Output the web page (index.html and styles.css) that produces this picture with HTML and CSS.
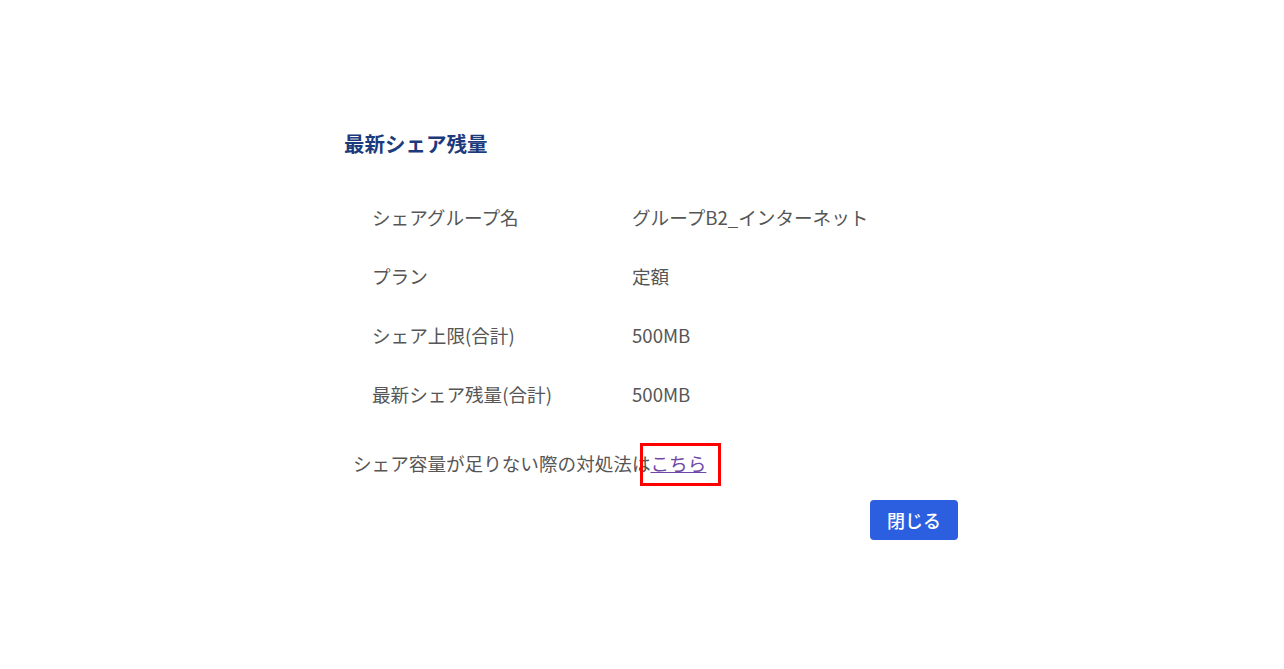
FILE: index.html
```html
<!DOCTYPE html>
<html lang="ja">
<head>
<meta charset="utf-8">
<link rel="stylesheet" href="styles.css">
</head>
<body>
<div class="dialog">
  <h2 class="title">最新シェア残量</h2>
  <div class="rows">
    <div class="row"><span class="label">シェアグループ名</span><span class="value">グループB2_インターネット</span></div>
    <div class="row"><span class="label">プラン</span><span class="value">定額</span></div>
    <div class="row"><span class="label">シェア上限(合計)</span><span class="value">500MB</span></div>
    <div class="row"><span class="label">最新シェア残量(合計)</span><span class="value">500MB</span></div>
  </div>
  <p class="note">シェア容量が足りない際の対処法は<span class="mark"><a href="#" class="link">こちら</a></span></p>
  <div class="actions"><button class="close">閉じる</button></div>
</div>
</body>
</html>
```
FILE: styles.css
```css
html, body { margin: 0; padding: 0; background: #fff; }
body {
  font-family: "Noto Sans CJK JP", "Noto Sans", sans-serif;
  width: 1284px; height: 669px; overflow: hidden;
}
.dialog {
  width: 614px;
  margin-left: 344px;
  padding-top: 128px;
}
.title {
  margin: 0;
  font-size: 20.5px;
  line-height: 30px;
  font-weight: 700;
  color: #1d3b7c;
}
.rows {
  margin-top: 29px;
  padding-left: 28px;
  display: flex;
  flex-direction: column;
}
.row {
  display: flex;
  height: 59px;
  align-items: center;
  font-size: 18.6px;
  color: #565656;
}
.label { width: 260px; }
.note {
  margin: 25px 0 0 9px;
  font-size: 18.6px;
  line-height: 30px;
  color: #565656;
}
.mark {
  position: relative;
  display: inline-block;
}
.mark::after {
  content: "";
  position: absolute;
  left: -11px; top: -5px;
  width: 75px; height: 37px;
  border: 3px solid #f00;
}
.link { color: #7048a8; text-decoration: underline; }
.actions {
  display: flex;
  justify-content: flex-end;
  margin-top: 22px;
}
.close {
  width: 88px; height: 40px;
  border: none;
  border-radius: 4px;
  background: #2c5fe0;
  color: #fff;
  font-family: "Noto Sans CJK JP", sans-serif;
  font-size: 18px;
  font-weight: 500;
}
```
